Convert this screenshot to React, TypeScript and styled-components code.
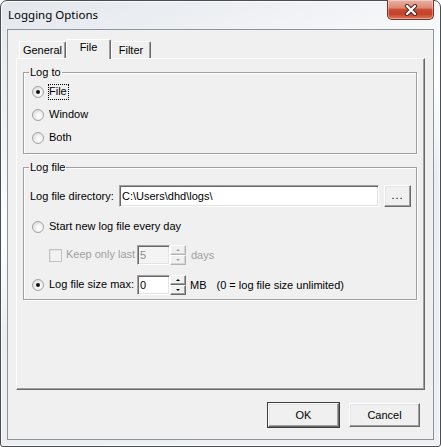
import * as React from "react";
import styled, { createGlobalStyle } from "styled-components";

const GlobalStyle = createGlobalStyle`
  html, body {
    margin: 0;
    padding: 0;
    background: #ffffff;
  }
  body {
    font-family: "Liberation Sans", Arial, sans-serif;
    font-size: 11px;
    color: #000;
  }
  * {
    box-sizing: border-box;
  }
`;

const DialogWindow = styled.div`
  width: 441px;
  height: 447px;
  display: flex;
  flex-direction: column;
  padding: 0 6px 6px;
  border: 1px solid #4a4e54;
  border-radius: 7px 7px 3px 3px;
  background: linear-gradient(160deg, #e3e7ec 0%, #f7f8fa 30%, #ffffff 38%, #eceff2 55%, #eef0f3 100%);
  box-shadow: inset 1px 1px 0 #fbfcfd, inset -1px -1px 0 #fbfcfd;
`;

const TitleBar = styled.div`
  height: 28px;
  flex-shrink: 0;
  display: flex;
  align-items: center;
  justify-content: space-between;
`;

const Caption = styled.span`
  padding: 0 0 2px 1px;
  font-family: "Noto Sans", "Open Sans", sans-serif;
  font-size: 11.5px;
  color: #000;
`;

const CloseButton = styled.div`
  align-self: flex-start;
  margin-top: -1px;
  width: 47px;
  height: 20px;
  display: flex;
  align-items: center;
  justify-content: center;
  border: 1px solid #7a3326;
  border-top: none;
  border-radius: 0 0 5px 5px;
  background: linear-gradient(#eab3a4 0%, #dd8a76 40%, #c7472f 52%, #c5432b 75%, #dc7a5e 100%);
  box-shadow: inset 0 0 0 1px rgba(255, 255, 255, 0.35);
`;

const Client = styled.div`
  flex: 1;
  display: flex;
  flex-direction: column;
  padding: 9px 8px 12px;
  border: 1px solid #8d949c;
  background: #f0f0f0;
`;

const TabStrip = styled.div`
  height: 19px;
  display: flex;
  align-items: flex-end;
  padding-left: 3px;
`;

const Tab = styled.div<{ $active?: boolean; $width: number }>`
  position: relative;
  z-index: ${(p) => (p.$active ? 1 : 0)};
  width: ${(p) => p.$width}px;
  height: ${(p) => (p.$active ? 20 : 17)}px;
  margin-bottom: ${(p) => (p.$active ? -1 : 0)}px;
  padding-top: ${(p) => (p.$active ? 1 : 2)}px;
  text-align: center;
  line-height: 13px;
  background: #f0f0f0;
  border: 1px solid #fff;
  border-bottom: none;
  border-right-color: #696969;
  border-radius: 2px 2px 0 0;
  box-shadow: inset -1px 0 0 #a0a0a0;
`;

const TabPanel = styled.div`
  flex: 1;
  display: flex;
  flex-direction: column;
  padding: 7px 7px 0 6px;
  border: 1px solid;
  border-color: #fff #696969 #696969 #fff;
  box-shadow: inset -1px -1px 0 #a0a0a0;
`;

const Group = styled.fieldset<{ $gapTop?: number }>`
  margin: ${(p) => p.$gapTop ?? 0}px 0 0;
  min-width: 0;
  border: 1px solid #a0a0a0;
  box-shadow: inset 1px 1px 0 #fff, 1px 1px 0 #fff;
  padding: 1px 5px 4px 6px;
`;

const GroupLegend = styled.legend`
  margin-left: -1px;
  padding: 0 1px;
  line-height: 13px;
`;

const Row = styled.div<{ $height: number; $top?: number; $indent?: number }>`
  display: flex;
  align-items: center;
  height: ${(p) => p.$height}px;
  margin-top: ${(p) => p.$top ?? 0}px;
  padding-left: ${(p) => p.$indent ?? 0}px;
`;

const RadioDot = styled.span<{ $checked?: boolean }>`
  position: relative;
  flex-shrink: 0;
  width: 12px;
  height: 12px;
  margin: 0 4px 0 2px;
  border: 1px solid #a3a3a3;
  border-radius: 50%;
  background: radial-gradient(circle at 62% 62%, #ffffff 0%, #f4f4f4 35%, #dedede 75%, #c9c9c9 100%);

  &::after {
    content: "";
    display: ${(p) => (p.$checked ? "block" : "none")};
    position: absolute;
    left: 3px;
    top: 3px;
    width: 4px;
    height: 4px;
    border-radius: 50%;
    background: #111;
  }
`;

const CheckBox = styled.span<{ $disabled?: boolean }>`
  flex-shrink: 0;
  width: 13px;
  height: 13px;
  margin-right: 3px;
  border: 1px solid ${(p) => (p.$disabled ? "#c2c2c2" : "#8e8f8f")};
  background: ${(p) => (p.$disabled ? "#f2f2f2" : "#fff")};
  box-shadow: inset 1px 1px 0 #e6e6e6;
`;

const OptionText = styled.span<{ $focused?: boolean; $disabled?: boolean; $width?: number }>`
  flex-shrink: 0;
  width: ${(p) => (p.$width ? `${p.$width}px` : "auto")};
  padding: 0 1px 1px 0;
  line-height: 13px;
  white-space: nowrap;
  color: ${(p) => (p.$disabled ? "#a0a0a0" : "#000")};
  border: 1px dotted ${(p) => (p.$focused ? "#000" : "transparent")};
`;

const FieldLabel = styled.span`
  width: 89px;
  flex-shrink: 0;
  white-space: nowrap;
`;

const TextBox = styled.div<{ $disabled?: boolean; $width?: number }>`
  flex: ${(p) => (p.$width ? "none" : "1")};
  width: ${(p) => (p.$width ? `${p.$width}px` : "auto")};
  height: 100%;
  display: flex;
  align-items: center;
  padding-left: 2px;
  border: 1px solid;
  border-color: #a0a0a0 #fff #fff #a0a0a0;
  box-shadow: inset 1px 1px 0 #696969, inset -1px -1px 0 #e3e3e3;
  background: ${(p) => (p.$disabled ? "#f4f4f4" : "#fff")};
  color: ${(p) => (p.$disabled ? "#8c8c8c" : "#000")};
  white-space: nowrap;
`;

const RaisedButton = styled.div<{ $default?: boolean; $width: number; $height: number }>`
  width: ${(p) => p.$width}px;
  height: ${(p) => p.$height}px;
  flex-shrink: 0;
  display: flex;
  align-items: center;
  justify-content: center;
  background: #f0f0f0;
  border: 1px solid;
  border-color: #fff #696969 #696969 #fff;
  box-shadow: ${(p) =>
    p.$default
      ? "0 0 0 1px #3c3c3c, inset -1px -1px 0 #a0a0a0, inset 1px 1px 0 #e3e3e3"
      : "inset -1px -1px 0 #a0a0a0, inset 1px 1px 0 #e3e3e3"};
`;

const BrowseButton = styled(RaisedButton)`
  margin-left: 5px;
  padding-bottom: 2px;
  letter-spacing: 1px;
`;

const SpinButtons = styled.div`
  width: 16px;
  height: 100%;
  display: flex;
  flex-direction: column;
`;

const SpinButton = styled.div<{ $disabled?: boolean }>`
  flex: 1;
  display: flex;
  align-items: center;
  justify-content: center;
  background: #f0f0f0;
  border: 1px solid;
  border-color: ${(p) => (p.$disabled ? "#fff #b4b4b4 #b4b4b4 #fff" : "#fff #696969 #696969 #fff")};
  box-shadow: inset -1px -1px 0 ${(p) => (p.$disabled ? "#d4d4d4" : "#a0a0a0")};
`;

const SpinArrow = styled.span<{ $dir: "up" | "down"; $disabled?: boolean }>`
  width: 0;
  height: 0;
  border-left: 2px solid transparent;
  border-right: 2px solid transparent;
  ${(p) =>
    p.$dir === "up"
      ? `border-bottom: 2px solid ${p.$disabled ? "#a0a0a0" : "#000"};`
      : `border-top: 2px solid ${p.$disabled ? "#a0a0a0" : "#000"};`}
`;

const UnitText = styled.span<{ $disabled?: boolean; $gap: number }>`
  margin-left: ${(p) => p.$gap}px;
  white-space: nowrap;
  color: ${(p) => (p.$disabled ? "#a0a0a0" : "#000")};
`;

const ButtonRow = styled.div`
  display: flex;
  justify-content: flex-end;
  gap: 10px;
  margin-top: 13px;
  padding-right: 5px;
`;

const CloseGlyph = () => (
  <svg width="14" height="12" viewBox="0 0 14 12">
    <path d="M3 2 L11 10 M11 2 L3 10" stroke="#4a2a24" strokeWidth="4.2" strokeLinecap="round" />
    <path d="M3 2 L11 10 M11 2 L3 10" stroke="#fff" strokeWidth="2.2" strokeLinecap="round" />
  </svg>
);

const SpinField: React.FC<{ value: string; disabled?: boolean }> = ({ value, disabled }) => (
  <>
    <TextBox $width={33} $disabled={disabled}>
      {value}
    </TextBox>
    <SpinButtons>
      <SpinButton $disabled={disabled}>
        <SpinArrow $dir="up" $disabled={disabled} />
      </SpinButton>
      <SpinButton $disabled={disabled}>
        <SpinArrow $dir="down" $disabled={disabled} />
      </SpinButton>
    </SpinButtons>
  </>
);

const App: React.FC = () => {
  return (
    <>
      <GlobalStyle />
      <DialogWindow>
        <TitleBar>
          <Caption>Logging Options</Caption>
          <CloseButton>
            <CloseGlyph />
          </CloseButton>
        </TitleBar>

        <Client>
          <TabStrip>
            <Tab $width={47}>General</Tab>
            <Tab $width={45} $active>
              File
            </Tab>
            <Tab $width={40}>Filter</Tab>
          </TabStrip>

          <TabPanel>
            <Group>
              <GroupLegend>Log to</GroupLegend>
              <Row $height={23}>
                <RadioDot $checked />
                <OptionText $focused>File</OptionText>
              </Row>
              <Row $height={23}>
                <RadioDot />
                <OptionText>Window</OptionText>
              </Row>
              <Row $height={23}>
                <RadioDot />
                <OptionText>Both</OptionText>
              </Row>
            </Group>

            <Group $gapTop={7}>
              <GroupLegend>Log file</GroupLegend>
              <Row $height={22} $top={10}>
                <FieldLabel>Log file directory:</FieldLabel>
                <TextBox>C:\Users\dhd\logs\</TextBox>
                <BrowseButton $width={27} $height={22}>
                  ...
                </BrowseButton>
              </Row>
              <Row $height={23} $top={8}>
                <RadioDot />
                <OptionText>Start new log file every day</OptionText>
              </Row>
              <Row $height={20} $top={7} $indent={19}>
                <CheckBox $disabled />
                <OptionText $disabled $width={72}>
                  Keep only last
                </OptionText>
                <SpinField value="5" disabled />
                <UnitText $disabled $gap={5}>
                  days
                </UnitText>
              </Row>
              <Row $height={20} $top={10}>
                <RadioDot $checked />
                <OptionText $width={89}>Log file size max:</OptionText>
                <SpinField value="0" />
                <UnitText $gap={4}>MB</UnitText>
                <UnitText $gap={10}>(0 = log file size unlimited)</UnitText>
              </Row>
            </Group>
          </TabPanel>

          <ButtonRow>
            <RaisedButton $default $width={71} $height={24}>
              OK
            </RaisedButton>
            <RaisedButton $width={71} $height={24}>
              Cancel
            </RaisedButton>
          </ButtonRow>
        </Client>
      </DialogWindow>
    </>
  );
};

export default App;
